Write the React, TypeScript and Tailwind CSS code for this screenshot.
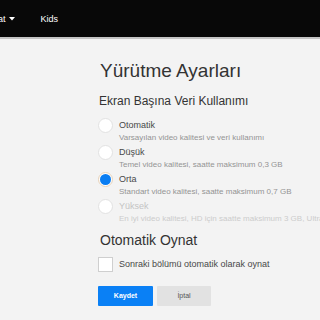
import React from "react";

type Opt = { label: string; desc: string; checked?: boolean; disabled?: boolean };

const options: Opt[] = [
  { label: "Otomatik", desc: "Varsayılan video kalitesi ve veri kullanımı" },
  { label: "Düşük", desc: "Temel video kalitesi, saatte maksimum 0,3 GB" },
  { label: "Orta", desc: "Standart video kalitesi, saatte maksimum 0,7 GB", checked: true },
  { label: "Yüksek", desc: "En iyi video kalitesi, HD için saatte maksimum 3 GB, Ultra HD için saatte maksimum 7 GB", disabled: true },
];

export default function App() {
  return (
    <div
      className="w-[320px] h-[320px] overflow-hidden bg-[#f3f3f3] text-[#333]"
      style={{ fontFamily: '"Liberation Sans", Arial, sans-serif' }}
    >
      <header className="h-[39px] bg-[#080808] border-b-2 border-[#c4c4c4] flex items-center text-white text-[9px] leading-[10px] whitespace-nowrap overflow-hidden">
        <div className="ml-[-21px] flex items-center">
          <span>Göz at</span>
          <svg width="6" height="4" viewBox="0 0 6 4" className="ml-[3px] mt-[1px]">
            <path d="M0 0 L6 0 L3 3.5 Z" fill="#fff" />
          </svg>
        </div>
        <span className="ml-[26px]">Kids</span>
      </header>

      <main className="pl-[98px] pt-[21px] whitespace-nowrap">
        <h1 className="text-[19px] leading-[22px] pl-[2px] text-[#333]">Yürütme Ayarları</h1>
        <h2 className="mt-[11px] text-[12px] leading-[16px] pl-[1px] text-[#333]">Ekran Başına Veri Kullanımı</h2>

        <div className="mt-[9px] flex flex-col gap-[3px]">
          {options.map((o) => (
            <div key={o.label} className="flex items-start">
              <div
                className={
                  "w-[15px] h-[15px] rounded-full bg-white border flex items-center justify-center shrink-0 " +
                  (o.checked ? "border-[#e8d2b8]" : "border-[#e2e2e2]")
                }
              >
                {o.checked && <div className="w-[11px] h-[11px] rounded-full bg-[#0a7df2]" />}
              </div>
              <div className="ml-[6px] flex flex-col">
                <span className={"text-[9px] leading-[15px] " + (o.disabled ? "text-[#c4c4c4]" : "text-[#484848]")}>
                  {o.label}
                </span>
                <span className={"text-[8px] leading-[9px] " + (o.disabled ? "text-[#cccccc]" : "text-[#949494]")}>
                  {o.desc}
                </span>
              </div>
            </div>
          ))}
        </div>

        <h2 className="mt-[8px] text-[14px] leading-[18px] pl-[2px] text-[#333]">Otomatik Oynat</h2>

        <div className="mt-[8px] flex items-center">
          <div className="w-[15px] h-[15px] bg-white border border-[#cfcfcf]" />
          <span className="ml-[6px] text-[9px] leading-[15px] text-[#484848]">Sonraki bölümü otomatik olarak oynat</span>
        </div>

        <div className="mt-[14px] flex gap-[4px]">
          <button className="w-[55px] h-[20px] bg-[#0a80f5] text-white text-[7px] font-bold rounded-[1px]">Kaydet</button>
          <button className="w-[54px] h-[20px] bg-[#e2e2e2] text-[#555] text-[7px] rounded-[1px]">İptal</button>
        </div>
      </main>
    </div>
  );
}
